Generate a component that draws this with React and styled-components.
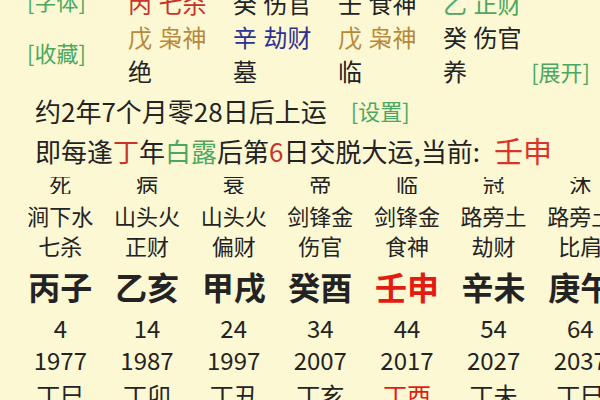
import React from 'react';
import styled, { createGlobalStyle } from 'styled-components';

const GlobalStyle = createGlobalStyle`
  html, body {
    margin: 0;
    padding: 0;
    background: #fcf8d3;
    overflow: hidden;
  }
  body {
    width: 600px;
    height: 400px;
    font-family: "Noto Sans CJK SC", "Noto Sans", sans-serif;
    color: #222;
  }
`;

const COLORS = {
  red: '#c8342b',
  brown: '#b8873a',
  blue: '#2d3192',
  green: '#4aa861',
  black: '#232323',
  hot: '#e31c12',
  now: '#d8352a',
};

const Page = styled.div`
  width: 600px;
  height: 400px;
  overflow: hidden;
`;

const Pillars = styled.div`
  display: grid;
  grid-template-columns: 101px 105px 105px 105px 1fr;
  grid-template-rows: repeat(3, 34px);
  margin-top: -14px;
  padding: 0 10px 0 27px;
`;

const Link = styled.span`
  color: ${COLORS.green};
  font-size: ${(p) => p.$size || 22}px;
  line-height: 22px;
  white-space: nowrap;
`;

const SideLink = styled(Link)`
  grid-column: 1;
  grid-row: ${(p) => p.$row};
  align-self: ${(p) => p.$align || 'center'};
  margin-top: ${(p) => p.$shift || 0}px;
`;

const ExpandLink = styled(Link)`
  grid-column: 5;
  grid-row: 3;
  justify-self: end;
  align-self: center;
`;

const Cell = styled.span`
  display: flex;
  align-items: center;
  font-size: 24px;
  line-height: 34px;
  white-space: nowrap;
  color: ${(p) => COLORS[p.$tone || 'black']};
  word-spacing: 1px;
`;

const Line = styled.div`
  display: flex;
  align-items: center;
  height: 40px;
  padding-left: 35px;
  font-size: 26px;
  white-space: nowrap;
  color: ${COLORS.black};
`;

const Gap = styled.span`
  width: ${(p) => p.$w}px;
`;

const Tint = styled.span`
  color: ${(p) => COLORS[p.$tone]};
  font-size: ${(p) => (p.$big ? '29px' : 'inherit')};
`;

const Columns = styled.div`
  display: grid;
  grid-template-columns: repeat(7, 86.67px);
  padding-left: 17px;
`;

const Clip = styled.div`
  height: 17px;
  margin: 7px 0 6px;
  overflow: hidden;
  display: flex;
  align-items: flex-end;
  justify-content: center;
  font-size: 22px;
  line-height: 22px;
`;

const ROW = {
  nayin: { size: 22, h: 30, weight: 400 },
  god: { size: 22, h: 31, weight: 400 },
  gz: { size: 32, h: 50, weight: 700 },
  age: { size: 24, h: 34, weight: 400 },
  year: { size: 24, h: 30, weight: 400 },
  liu: { size: 24, h: 40, weight: 400 },
};

const ColCell = styled.div`
  text-align: center;
  white-space: nowrap;
  font-size: ${(p) => ROW[p.$kind].size}px;
  line-height: ${(p) => ROW[p.$kind].h}px;
  font-weight: ${(p) => ROW[p.$kind].weight};
  color: ${(p) => (p.$hot ? COLORS.hot : COLORS.black)};
`;

const pillars = [
  [['丙 七杀', 'red'], ['癸 伤官'], ['壬 食神'], ['乙 正财', 'green']],
  [['戊 枭神', 'brown'], ['辛 劫财', 'blue'], ['戊 枭神', 'brown'], ['癸 伤官']],
  [['绝'], ['墓'], ['临'], ['养']],
];

const luck = [
  { cs: '死', ny: '涧下水', god: '七杀', gz: '丙子', age: 4, year: 1977, ln: '丁巳' },
  { cs: '病', ny: '山头火', god: '正财', gz: '乙亥', age: 14, year: 1987, ln: '丁卯' },
  { cs: '衰', ny: '山头火', god: '偏财', gz: '甲戌', age: 24, year: 1997, ln: '丁丑' },
  { cs: '帝', ny: '剑锋金', god: '伤官', gz: '癸酉', age: 34, year: 2007, ln: '丁亥' },
  { cs: '临', ny: '剑锋金', god: '食神', gz: '壬申', age: 44, year: 2017, ln: '丁酉', now: true },
  { cs: '冠', ny: '路旁土', god: '劫财', gz: '辛未', age: 54, year: 2027, ln: '丁未' },
  { cs: '沐', ny: '路旁土', god: '比肩', gz: '庚午', age: 64, year: 2037, ln: '丁巳' },
];

export default function App() {
  return (
    <Page>
      <GlobalStyle />
      <Pillars>
        <SideLink $row={1} $align="start" $shift={3}>[字体]</SideLink>
        <SideLink $row="2 / span 2" $shift={-4}>[收藏]</SideLink>
        {pillars.map((row, r) =>
          row.map(([text, tone], c) => (
            <Cell
              key={`${r}-${c}`}
              $tone={tone}
              style={{ gridRow: r + 1, gridColumn: c + 2 }}
            >
              {text}
            </Cell>
          ))
        )}
        <ExpandLink>[展开]</ExpandLink>
      </Pillars>

      <Line style={{ marginTop: 2 }}>
        约2年7个月零28日后上运
        <Gap $w={24} />
        <Link>[设置]</Link>
      </Line>
      <Line>
        即每逢<Tint $tone="red">丁</Tint>年<Tint $tone="green">白露</Tint>后第
        <Tint $tone="red">6</Tint>日交脱大运,当前:
        <Gap $w={14} />
        <Tint $tone="now" $big>壬申</Tint>
      </Line>

      <Columns>
        {luck.map((l) => (
          <Clip key={`cs-${l.age}`}>
            <span>{l.cs}</span>
          </Clip>
        ))}
        {luck.map((l) => (
          <ColCell key={`ny-${l.age}`} $kind="nayin">{l.ny}</ColCell>
        ))}
        {luck.map((l) => (
          <ColCell key={`god-${l.age}`} $kind="god">{l.god}</ColCell>
        ))}
        {luck.map((l) => (
          <ColCell key={`gz-${l.age}`} $kind="gz" $hot={l.now}>{l.gz}</ColCell>
        ))}
        {luck.map((l) => (
          <ColCell key={`age-${l.age}`} $kind="age">{l.age}</ColCell>
        ))}
        {luck.map((l) => (
          <ColCell key={`yr-${l.age}`} $kind="year">{l.year}</ColCell>
        ))}
        {luck.map((l) => (
          <ColCell key={`ln-${l.age}`} $kind="liu" $hot={l.now}>{l.ln}</ColCell>
        ))}
      </Columns>
    </Page>
  );
}
